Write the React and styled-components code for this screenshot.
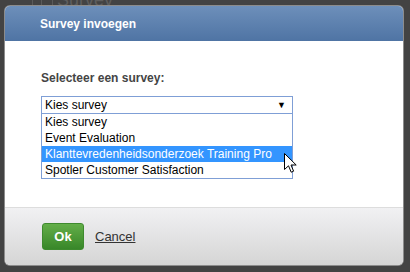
import React from 'react';
import styled, { createGlobalStyle } from 'styled-components';

const GlobalStyle = createGlobalStyle`
  html, body {
    margin: 0;
    padding: 0;
    background: #434343;
    font-family: "Liberation Sans", Arial, sans-serif;
  }
`;

const Page = styled.div`
  position: relative;
  width: 410px;
  height: 272px;
  overflow: hidden;
  background: #434343;
`;

const BackRow = styled.div`
  display: flex;
  align-items: center;
  gap: 10px;
  height: 12px;
  margin-top: -6px;
  padding-left: 32px;
  color: #5e5e5e;
  font-size: 18px;
`;

const BackBox = styled.span`
  width: 8px;
  height: 10px;
  border: 1px solid #5a5a5a;
`;

const BackText = styled.span`
  border-left: 1px solid #5a5a5a;
  padding-left: 4px;
  line-height: 12px;
`;

const Modal = styled.div`
  position: absolute;
  left: 5px;
  top: 6px;
  width: 398px;
  height: 259px;
  display: flex;
  flex-direction: column;
  border-radius: 5px;
  overflow: hidden;
  box-shadow: 0 0 0 1px #8c8c8c;
  background: #fff;
`;

const Header = styled.div`
  height: 35px;
  flex: none;
  display: flex;
  align-items: center;
  padding-left: 35px;
  background: linear-gradient(#6d8fba, #4f74a4);
  color: #fff;
  font-size: 12px;
  font-weight: bold;
`;

const Body = styled.div`
  flex: 1;
  padding: 30px 36px 0;
`;

const Label = styled.div`
  color: #444;
  font-size: 12px;
  font-weight: bold;
  line-height: 14px;
  margin-bottom: 11px;
`;

const SelectWrap = styled.div`
  position: relative;
  width: 252px;
`;

const Select = styled.div`
  height: 16px;
  display: flex;
  align-items: center;
  justify-content: space-between;
  padding: 0 6px 0 3px;
  border: 1px solid #7f9fd6;
  font-size: 12px;
  color: #000;
`;

const Arrow = styled.span`
  font-size: 9px;
`;

const Menu = styled.ul`
  position: absolute;
  top: 100%;
  left: 0;
  width: 250px;
  margin: 0;
  padding: 0;
  list-style: none;
  border: 1px solid #7f9fd6;
  border-top: none;
  background: #fff;
`;

const Option = styled.li`
  height: 16px;
  line-height: 16px;
  padding-left: 3px;
  font-size: 12px;
  white-space: nowrap;
  color: ${p => (p.highlighted ? '#fff' : '#000')};
  background: ${p => (p.highlighted ? '#3395ff' : 'transparent')};
`;

const Footer = styled.div`
  height: 58px;
  flex: none;
  display: flex;
  align-items: flex-start;
  gap: 11px;
  padding: 15px 0 0 37px;
  box-sizing: border-box;
  border-top: 1px solid #dddddd;
  background: linear-gradient(#f1f1f3, #d5d5d5);
`;

const OkButton = styled.button`
  width: 42px;
  height: 27px;
  border: 1px solid #3e8a2e;
  border-radius: 3px;
  background: linear-gradient(#63ae48, #388729);
  color: #fff;
  font-family: inherit;
  font-size: 13px;
  font-weight: bold;
  padding: 0;
`;

const CancelLink = styled.a`
  margin-top: 6px;
  color: #333;
  font-size: 13px;
  text-decoration: underline;
`;

const Cursor = styled.svg`
  position: absolute;
  left: 284px;
  top: 153px;
`;

const options = [
  'Kies survey',
  'Event Evaluation',
  'Klanttevredenheidsonderzoek Training Pro',
  'Spotler Customer Satisfaction',
];

export default function App() {
  return (
    <Page>
      <GlobalStyle />
      <BackRow>
        <BackBox />
        <BackText>Survey</BackText>
      </BackRow>
      <Modal>
        <Header>Survey invoegen</Header>
        <Body>
          <Label>Selecteer een survey:</Label>
          <SelectWrap>
            <Select>
              <span>Kies survey</span>
              <Arrow>▼</Arrow>
            </Select>
            <Menu>
              {options.map((o, i) => (
                <Option key={o} highlighted={i === 2}>
                  {o}
                </Option>
              ))}
            </Menu>
          </SelectWrap>
        </Body>
        <Footer>
          <OkButton>Ok</OkButton>
          <CancelLink>Cancel</CancelLink>
        </Footer>
      </Modal>
      <Cursor width="13" height="21" viewBox="0 0 13 21">
        <path
          d="M0.5 0.5 L0.5 16.5 L4.5 12.8 L7.2 19.2 L9.6 18.2 L7 12 L12.2 12 Z"
          fill="#fff"
          stroke="#000"
          strokeWidth="1"
          strokeLinejoin="miter"
        />
      </Cursor>
    </Page>
  );
}
